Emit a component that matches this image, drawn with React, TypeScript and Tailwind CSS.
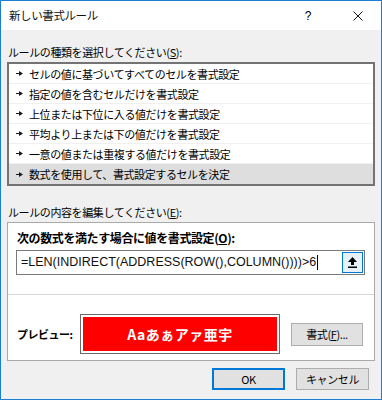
import React from "react";

const ui = { fontFamily: '"Noto Sans CJK JP", "Noto Sans", sans-serif' };

const rules = [
  "セルの値に基づいてすべてのセルを書式設定",
  "指定の値を含むセルだけを書式設定",
  "上位または下位に入る値だけを書式設定",
  "平均より上または下の値だけを書式設定",
  "一意の値または重複する値だけを書式設定",
  "数式を使用して、書式設定するセルを決定",
];

function RuleArrow() {
  return (
    <svg width="7" height="5" viewBox="0 0 7 5" className="shrink-0">
      <rect x="0" y="2" width="3.5" height="1" fill="#1a1a1a" />
      <polygon points="3,0 7,2.5 3,5" fill="#1a1a1a" />
    </svg>
  );
}

function UpArrow() {
  return (
    <svg width="9" height="11" viewBox="0 0 9 11">
      <polygon points="4.5,0 0,5 9,5" fill="#000" />
      <rect x="3" y="4.5" width="3" height="3.5" fill="#000" />
      <rect x="0" y="9.5" width="9" height="1.5" fill="#000" />
    </svg>
  );
}

function CloseIcon() {
  return (
    <svg width="10" height="10" viewBox="0 0 10 10">
      <path d="M0.5 0.5 L9.5 9.5 M9.5 0.5 L0.5 9.5" stroke="#111" strokeWidth="1" />
    </svg>
  );
}

export default function App() {
  return (
    <div
      style={ui}
      className="w-[382px] h-[400px] border border-[#1a7fd4] bg-[#f0f0f0] flex flex-col text-[11px] tracking-[-0.4px] text-black overflow-hidden"
    >
      {/* title bar */}
      <div className="h-[29px] bg-white flex items-center pl-[8px] shrink-0">
        <span className="text-[11.5px] text-[#111]">新しい書式ルール</span>
        <span className="ml-auto w-[16px] text-center text-[12px] mr-[37px]" style={{ fontFamily: '"Liberation Sans", sans-serif' }}>
          ?
        </span>
        <span className="mr-[18px] flex items-center">
          <CloseIcon />
        </span>
      </div>

      <div className="flex flex-col px-[6px]">
        <div className="mt-[14px] leading-[16px] pl-[1px]">
          ルールの種類を選択してください(<span className="underline">S</span>):
        </div>

        <div className="mt-[2px] border-2 border-[#737373] bg-white flex flex-col">
          {rules.map((r, i) => (
            <div
              key={i}
              className={
                "h-[20px] flex items-center gap-[6px] pl-[7px] " +
                (i === rules.length - 1 ? "bg-[#dedede]" : "border-b border-[#f0f0f0]")
              }
            >
              <RuleArrow />
              <span className="leading-[16px]">{r}</span>
            </div>
          ))}
        </div>

        <div className="mt-[18px] leading-[16px] pl-[1px]">
          ルールの内容を編集してください(<span className="underline">E</span>):
        </div>

        <div className="mt-[2px] border border-[#a9a9a9] bg-white flex flex-col">
          <div className="pt-[7px] pl-[8px] pr-[9px] pb-[19px]">
            <div className="font-bold text-[12px] leading-[16px] pl-[1px]">
              次の数式を満たす場合に値を書式設定(<span className="underline">O</span>):
            </div>
            <div className="mt-[4px] h-[25px] border border-[#7a7a7a] flex items-center">
              <div
                className="flex-1 flex items-center pl-[4px] text-[12.5px] tracking-[0px] text-[#111]"
                style={{ fontFamily: '"Liberation Sans", sans-serif' }}
              >
                <span>=LEN(INDIRECT(ADDRESS(ROW(),COLUMN())))&gt;6</span>
                <span className="w-px h-[15px] bg-black ml-px" />
              </div>
              <div className="w-[21px] h-[21px] mr-px border border-[#0078d7] bg-[#e5f1fb] flex items-center justify-center">
                <UpArrow />
              </div>
            </div>
          </div>
          <div className="h-px bg-[#d8d8d8]" />
          <div className="pt-[19px] pb-[6px] pl-[9px] flex items-center">
            <span className="w-[63px] font-bold tracking-[-0.5px]">プレビュー:</span>
            <div className="w-[200px] h-[40px] border border-[#6a6a6a] p-[2px] bg-white">
              <div className="w-full h-full bg-[#ff0000] flex items-center justify-center text-white font-bold text-[14px] tracking-[0.5px]">
                Aaあぁアァ亜宇
              </div>
            </div>
            <div className="ml-[11px] w-[72px] h-[23px] border border-[#adadad] bg-[#e1e1e1] flex items-center justify-center">
              書式(<span className="underline">F</span>)...
            </div>
          </div>
        </div>

        <div className="mt-[7px] flex justify-end gap-[11px] pr-[6px]">
          <div className="w-[73px] h-[22px] border-2 border-[#0078d7] bg-[#e1e1e1] flex items-center justify-center">
            OK
          </div>
          <div className="w-[73px] h-[22px] border border-[#adadad] bg-[#e1e1e1] flex items-center justify-center">
            キャンセル
          </div>
        </div>
      </div>
    </div>
  );
}
